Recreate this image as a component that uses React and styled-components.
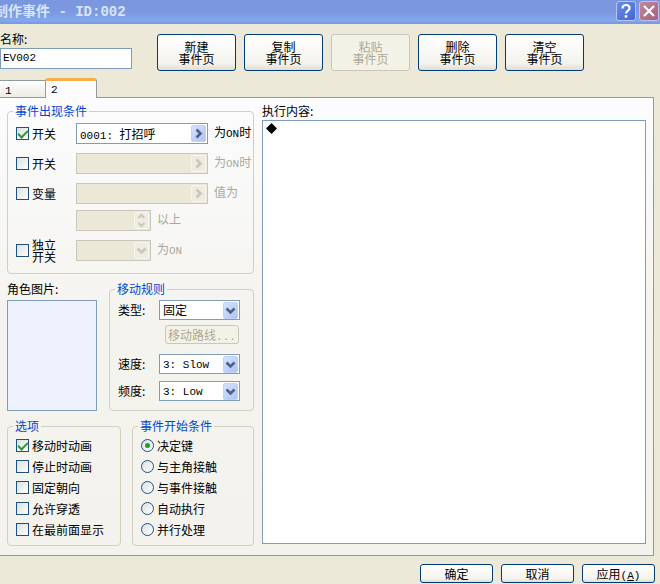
import { useState } from 'react';
import styled, { createGlobalStyle, css } from 'styled-components';

const GlobalStyle = createGlobalStyle`
  * {
    box-sizing: border-box;
  }
  body {
    margin: 0;
    background: #ECE9D8;
  }
  body, button, input, select {
    font-family: 'Noto Sans CJK SC', sans-serif;
    font-size: 12px;
    line-height: 14px;
    color: #000;
  }
`

export default function App() {
  const [tab, setTab] = useState(1)
  const actions = [
    {text: '新建'},
    {text: '复制'},
    {text: '粘贴', disabled: true},
    {text: '删除'},
    {text: '清空'},
  ]
  const options = [
    {text: '移动时动画', checked: true},
    {text: '停止时动画'},
    {text: '固定朝向'},
    {text: '允许穿透'},
    {text: '在最前面显示'},
  ]
  const triggers = ['决定键', '与主角接触', '与事件接触', '自动执行', '并行处理']

  return <Window>
    <GlobalStyle />
    <TitleBar>
      <Title>制作事件<TitleCode> - ID:002</TitleCode></Title>
      <TitleButton aria-label='帮助'>
        <svg width='18' height='18' viewBox='0 0 18 18' fill='none' stroke='#fff' strokeWidth='2.2'>
          <path d='M5.5 6.5C5.5 1.8 12.8 2 12.6 6.2C12.5 8.6 9 8.6 9 11.6' />
          <path d='M9 13.2V15.6' strokeWidth='2.6' />
        </svg>
      </TitleButton>
      <TitleButton $close aria-label='关闭'>
        <svg width='18' height='18' viewBox='0 0 18 18' stroke='#fff' strokeWidth='2.2'>
          <path d='M4 4L14 14M14 4L4 14' />
        </svg>
      </TitleButton>
    </TitleBar>

    <Header>
      <NameField>
        <label htmlFor='name'>名称:</label>
        <TextInput id='name' defaultValue='EV002' />
      </NameField>
      <Toolbar>
        {
          actions.map((action) => {
            return <PageButton key={action.text} disabled={action.disabled}>{action.text}<br />事件页</PageButton>
          })
        }
      </Toolbar>
    </Header>

    <Tabs role='tablist'>
      {
        ['1', '2'].map((text, index) => {
          return <Tab key={text} role='tab' aria-selected={tab === index} $active={tab === index} onClick={() => setTab(index)}>
            <Code>{text}</Code>
          </Tab>
        })
      }
    </Tabs>

    <Page role='tabpanel'>
      <Settings>
        <Group>
          <Legend>事件出现条件</Legend>
          <Conditions>
            <Condition>
              <Option><Checkbox defaultChecked />开关</Option>
              <Picker><span><Code>0001: </Code>打招呼</span><Arrow direction='right' /></Picker>
              <span>为<Code>ON</Code>时</span>
            </Condition>
            <Condition>
              <Option><Checkbox />开关</Option>
              <Picker disabled aria-label='开关'><span /><Arrow direction='right' disabled /></Picker>
              <Muted>为<Code>ON</Code>时</Muted>
            </Condition>
            <Variable>
              <Condition>
                <Option><Checkbox />变量</Option>
                <Picker disabled aria-label='变量'><span /><Arrow direction='right' disabled /></Picker>
                <Muted>值为</Muted>
              </Condition>
              <Condition $short>
                <span />
                <SelectBox $disabled>
                  <NumberInput type='number' disabled aria-label='值' />
                  <Arrow direction='spin' disabled />
                </SelectBox>
                <Muted>以上</Muted>
              </Condition>
            </Variable>
            <Condition $short>
              <Option $tight><Checkbox /><span>独立<br />开关</span></Option>
              <SelectBox $disabled>
                <Select disabled aria-label='独立开关' />
                <Arrow direction='down' disabled />
              </SelectBox>
              <Muted>为<Code>ON</Code></Muted>
            </Condition>
          </Conditions>
        </Group>

        <Columns $template='90px 1fr' $gap='12px'>
          <Graphic>
            <span>角色图片:</span>
            <Preview aria-label='角色图片' />
          </Graphic>
          <Group>
            <Legend>移动规则</Legend>
            <Movement>
              <MoveRow>
                <label htmlFor='type'>类型:</label>
                <SelectBox>
                  <Select id='type'><option>固定</option></Select>
                  <Arrow direction='down' />
                </SelectBox>
              </MoveRow>
              <RouteButton disabled>移动路线<Code>...</Code></RouteButton>
              <MoveRow>
                <label htmlFor='speed'>速度:</label>
                <SelectBox>
                  <Select id='speed' $code><option>3: Slow</option></Select>
                  <Arrow direction='down' />
                </SelectBox>
              </MoveRow>
              <MoveRow>
                <label htmlFor='freq'>频度:</label>
                <SelectBox>
                  <Select id='freq' $code><option>3: Low</option></Select>
                  <Arrow direction='down' />
                </SelectBox>
              </MoveRow>
            </Movement>
          </Group>
        </Columns>

        <Columns $template='114px 1fr' $gap='11px'>
          <Group>
            <Legend>选项</Legend>
            <OptionList>
              {
                options.map((option) => {
                  return <Option key={option.text}><Checkbox defaultChecked={option.checked} />{option.text}</Option>
                })
              }
            </OptionList>
          </Group>
          <Group>
            <Legend>事件开始条件</Legend>
            <OptionList>
              {
                triggers.map((text, index) => {
                  return <Option key={text}><Radio name='trigger' defaultChecked={index === 0} />{text}</Option>
                })
              }
            </OptionList>
          </Group>
        </Columns>
      </Settings>

      <Contents>
        <span>执行内容:</span>
        <CommandList>
          <Command>
            <svg width='11' height='11' viewBox='0 0 11 11'><path d='M5.5 0L11 5.5L5.5 11L0 5.5Z' /></svg>
          </Command>
        </CommandList>
      </Contents>
    </Page>

    <Footer>
      <FooterButton>确定</FooterButton>
      <FooterButton>取消</FooterButton>
      <FooterButton>应用<Code>(<u>A</u>)</Code></FooterButton>
    </Footer>
  </Window>
}

function Arrow({direction, disabled}) {
  const paths = {
    right: 'M4.5 3.5L8.5 7.5L4.5 11.5',
    down: 'M2.5 5.5L6.5 9.5L10.5 5.5',
    spin: 'M3.5 5L6.5 2L9.5 5M3.5 10L6.5 13L9.5 10',
  }
  return <ArrowBox $disabled={disabled}>
    <svg width='13' height='15' viewBox='0 0 13 15' fill='none' stroke={disabled ? '#C9C7BA' : '#4D6185'} strokeWidth={direction === 'spin' ? 2 : 2.6}>
      <path d={paths[direction]} />
    </svg>
  </ArrowBox>
}

const Window = styled.div`
  display: flex;
  flex-flow: column;
  overflow: hidden;
`
const TitleBar = styled.header`
  display: flex;
  align-items: flex-start;
  column-gap: 3px;
  height: 24px;
  padding: 1px 1px 0 0;
  background: linear-gradient(#7A96DF 0, #7B98E0 50%, #82A8EE 85%, #7A96DF 100%);
`
const Title = styled.h1`
  flex: 1;
  margin: 0 0 0 -6px;
  color: #D8E4F8;
  font-size: 14px;
  line-height: 18px;
  font-weight: bold;
`
const TitleCode = styled.span`
  font-family: 'Liberation Mono', monospace;
  white-space: pre;
`
const TitleButton = styled.button`
  display: grid;
  place-items: center;
  width: 20px;
  height: 20px;
  padding: 0;
  border: 1px solid #B4C6F0;
  border-radius: 3px;
  background: ${props => props.$close
    ? 'linear-gradient(135deg, #C08A9E, #A85F78)'
    : 'linear-gradient(135deg, #6C8EE6, #3F66D6)'};
`
const Header = styled.div`
  display: flex;
  column-gap: 25px;
  padding: 8px 0 7px;
`
const NameField = styled.div`
  display: flex;
  flex-flow: column;
  row-gap: 2px;
  width: 132px;
`
const Code = styled.span`
  font-family: 'Liberation Mono', monospace;
  font-size: 11px;
  line-height: 0;
  white-space: pre;
`
const Muted = styled.span`
  color: #ACA899;
`
const TextInput = styled.input`
  width: 100%;
  height: 21px;
  padding: 0 2px 2px;
  border: 1px solid #7F9DB9;
  background: #fff;
  font-family: 'Liberation Mono', monospace;
  font-size: 11px;
`
const Toolbar = styled.div`
  display: flex;
  column-gap: 8px;
  padding-top: 2px;
`
const Button = styled.button`
  padding: 0;
  border: 1px solid #003C74;
  border-radius: 3px;
  background: linear-gradient(#fff, #F4F3EE 80%, #E2DED2);
  &:disabled {
    border-color: #C9C7BA;
    background: #F3F2E7;
    color: #ACA899;
  }
`
const PageButton = styled(Button)`
  width: 79px;
  height: 37px;
  line-height: 12px;
`
const Tabs = styled.div`
  display: flex;
  align-items: flex-end;
  height: 19px;
`
const Tab = styled.button`
  position: relative;
  width: 45px;
  height: 17px;
  padding: 0 5px;
  border: 1px solid #919B9C;
  border-width: 1px 0 0;
  background: linear-gradient(#FEFEFE, #ECEBE6);
  text-align: left;
  ${props => props.$active && css`
    width: 52px;
    height: 20px;
    margin-bottom: -1px;
    padding-bottom: 3px;
    border-width: 3px 1px 0;
    border-top-color: #F5B04C;
    border-radius: 3px 3px 0 0;
    background: #FCFCFE;
  `}
`
const Page = styled.main`
  display: flex;
  column-gap: 8px;
  margin-right: 6px;
  padding: 6px 7px 9px;
  border: 1px solid #919B9C;
  border-left: 0;
  background: linear-gradient(#FCFCFE, #F4F3EE 50%, #F3F2ED);
`
const Settings = styled.div`
  display: flex;
  flex-flow: column;
  flex: none;
  row-gap: 8px;
  width: 247px;
`
const Group = styled.fieldset`
  min-width: 0;
  margin: 0;
  padding: 0 0 0 8px;
  border: 1px solid #D0D0BF;
  border-radius: 4px;
`
const Legend = styled.legend`
  margin-left: -3px;
  padding: 0 2px;
  color: #0046D5;
  line-height: 14px;
`
const Conditions = styled.div`
  display: flex;
  flex-flow: column;
  row-gap: 9px;
  padding: 5px 0 12px;
`
const Condition = styled.div`
  display: grid;
  grid-template-columns: 60px ${props => props.$short ? '75px' : '132px'} 1fr;
  grid-template-rows: 21px;
  align-items: center;
  white-space: nowrap;
  & > :last-child {
    padding: 0 0 3px 6px;
  }
`
const Variable = styled.div`
  display: flex;
  flex-flow: column;
  row-gap: 6px;
`
const Option = styled.label`
  display: flex;
  align-items: center;
  column-gap: 3px;
  line-height: ${props => props.$tight ? '12px' : '14px'};
  white-space: nowrap;
`
const Checkbox = styled.input.attrs({type: 'checkbox'})`
  appearance: none;
  flex: none;
  display: grid;
  place-items: center;
  width: 13px;
  height: 13px;
  margin: 0;
  border: 1px solid #1C5180;
  background: linear-gradient(135deg, #DCE0E0, #fff);
  &:checked::after {
    content: '';
    width: 8px;
    height: 4px;
    border: solid #21A121;
    border-width: 0 0 2px 2px;
    transform: translateY(-1px) rotate(-45deg);
  }
`
const Radio = styled.input.attrs({type: 'radio'})`
  appearance: none;
  flex: none;
  display: grid;
  place-items: center;
  width: 13px;
  height: 13px;
  margin: 0;
  border: 1px solid #1C5180;
  border-radius: 50%;
  background: linear-gradient(135deg, #DCE0E0, #fff);
  &:checked::after {
    content: '';
    width: 5px;
    height: 5px;
    border-radius: 50%;
    background: #21A121;
  }
`
const Picker = styled.button`
  display: flex;
  align-items: center;
  justify-content: space-between;
  height: 21px;
  padding: 0 1px 0 3px;
  border: 1px solid #7F9DB9;
  background: #fff;
  &:disabled {
    border-color: #C9C7BA;
    background: #EBE8D7;
  }
`
const ArrowBox = styled.span`
  display: grid;
  place-items: center;
  flex: none;
  width: 15px;
  height: 17px;
  border: 1px solid ${props => props.$disabled ? '#F7F6F0' : '#C0D2F8'};
  border-radius: 2px;
  background: ${props => props.$disabled ? '#EEECE0' : 'linear-gradient(135deg, #D6E2FD, #AEC4F6)'};
  pointer-events: none;
`
const SelectBox = styled.div`
  display: flex;
  align-items: center;
  height: ${props => props.$disabled ? '21px' : '20px'};
  padding-right: 1px;
  border: 1px solid ${props => props.$disabled ? '#C9C7BA' : '#7F9DB9'};
  background: ${props => props.$disabled ? '#EBE8D7' : '#fff'};
`
const Select = styled.select`
  appearance: none;
  flex: 1;
  min-width: 0;
  height: 18px;
  padding: 0 3px;
  border: 0;
  background: transparent;
  ${props => props.$code && css`
    padding-top: 1px;
    font-family: 'Liberation Mono', monospace;
    font-size: 11px;
  `}
`
const NumberInput = styled.input`
  appearance: textfield;
  flex: 1;
  min-width: 0;
  height: 18px;
  padding: 0 3px;
  border: 0;
  background: transparent;
`
const Columns = styled.div`
  display: grid;
  grid-template-columns: ${props => props.$template};
  column-gap: ${props => props.$gap};
`
const Graphic = styled.div`
  display: flex;
  flex-flow: column;
  row-gap: 4px;
`
const Preview = styled.button`
  flex: 1;
  border: 1px solid #7F9DB9;
  background: #EEF2FF;
`
const Movement = styled.div`
  display: flex;
  flex-flow: column;
  row-gap: 7px;
  padding: 4px 0 9px;
`
const MoveRow = styled.div`
  display: grid;
  grid-template-columns: 41px 81px;
  align-items: center;
`
const RouteButton = styled(Button)`
  width: 74px;
  height: 19px;
  margin: -2px 0 3px 47px;
  white-space: nowrap;
`
const OptionList = styled.div`
  display: grid;
  grid-auto-rows: 21px;
  padding: 2px 0 5px;
`
const Contents = styled.section`
  display: flex;
  flex-flow: column;
  flex: 1;
  row-gap: 2px;
  min-width: 0;
`
const CommandList = styled.ul`
  flex: 1;
  margin: 0 0 2px;
  padding: 2px 3px;
  border: 1px solid #7F9DB9;
  background: #fff;
  list-style: none;
`
const Command = styled.li`
  display: flex;
`
const Footer = styled.footer`
  display: flex;
  justify-content: flex-end;
  column-gap: 8px;
  padding: 8px 5px 1px 0;
`
const FooterButton = styled(Button)`
  width: 73px;
  height: 19px;
`
